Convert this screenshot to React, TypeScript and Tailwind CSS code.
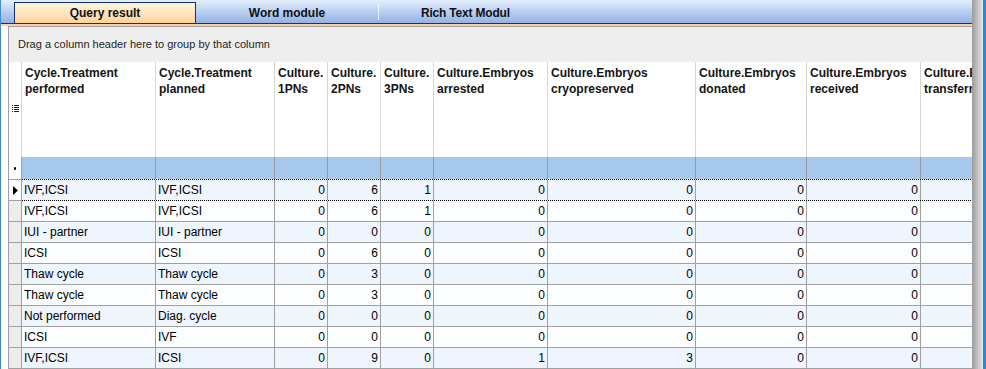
import React from "react";

type Col = { w: string; h: [string, string]; num: boolean };

const COLS: Col[] = [
  { w: "w-[134px]", h: ["Cycle.Treatment", "performed"], num: false },
  { w: "w-[119px]", h: ["Cycle.Treatment", "planned"], num: false },
  { w: "w-[53px]", h: ["Culture.", "1PNs"], num: true },
  { w: "w-[53px]", h: ["Culture.", "2PNs"], num: true },
  { w: "w-[53px]", h: ["Culture.", "3PNs"], num: true },
  { w: "w-[114px]", h: ["Culture.Embryos", "arrested"], num: true },
  { w: "w-[148px]", h: ["Culture.Embryos", "cryopreserved"], num: true },
  { w: "w-[111px]", h: ["Culture.Embryos", "donated"], num: true },
  { w: "w-[114px]", h: ["Culture.Embryos", "received"], num: true },
  { w: "w-[60px]", h: ["Culture.Embryos", "transferred"], num: true },
];

const ROWS: string[][] = [
  ["IVF,ICSI", "IVF,ICSI", "0", "6", "1", "0", "0", "0", "0", ""],
  ["IVF,ICSI", "IVF,ICSI", "0", "6", "1", "0", "0", "0", "0", ""],
  ["IUI - partner", "IUI - partner", "0", "0", "0", "0", "0", "0", "0", ""],
  ["ICSI", "ICSI", "0", "6", "0", "0", "0", "0", "0", ""],
  ["Thaw cycle", "Thaw cycle", "0", "3", "0", "0", "0", "0", "0", ""],
  ["Thaw cycle", "Thaw cycle", "0", "3", "0", "0", "0", "0", "0", ""],
  ["Not performed", "Diag. cycle", "0", "0", "0", "0", "0", "0", "0", ""],
  ["ICSI", "IVF", "0", "0", "0", "0", "0", "0", "0", ""],
  ["IVF,ICSI", "ICSI", "0", "9", "0", "1", "3", "0", "0", ""],
];

const font = { fontFamily: '"Liberation Sans", Arial, sans-serif' };

function ColumnsIcon() {
  return (
    <svg width="7" height="9" viewBox="0 0 7 9">
      {[0, 1, 2, 3].map((i) => (
        <g key={i} fill="#222">
          <rect x="0" y={1 + i * 2} width="1" height="1" />
          <rect x="2" y={1 + i * 2} width="5" height="1" />
        </g>
      ))}
    </svg>
  );
}

function Triangle() {
  return (
    <svg width="5" height="9" viewBox="0 0 5 9">
      <polygon points="0,0 5,4.5 0,9" fill="#000" />
    </svg>
  );
}

export default function App() {
  return (
    <div className="w-[986px] h-[369px] flex overflow-hidden bg-white" style={font}>
      <div className="w-[1px] shrink-0 bg-[#3c8ddb]" />
      <div className="w-[971px] shrink-0 flex flex-col">
        {/* Tab bar */}
        <div className="h-[24px] shrink-0 flex items-end pl-[13px] border-b border-[#16307e] bg-linear-to-b from-[#e3eefc] to-[#92b2e6]">
          <div className="w-[182px] h-[21px] flex items-center justify-center border-t border-l border-r border-[#12307e] bg-linear-to-b from-[#fff6de] to-[#fcd39b] text-[12px] font-bold text-[#111]">
            Query result
          </div>
          <div className="w-[182px] h-[21px] flex items-center justify-center text-[12px] font-bold text-[#111]">
            Word module
          </div>
          <div className="w-[1px] h-[16px] mb-[3px] bg-[#f2f6fd]" />
          <div className="h-[21px] flex items-center pl-[42px] text-[12px] font-bold text-[#111] tracking-[-0.2px]">
            Rich Text Modul
          </div>
        </div>
        <div className="h-[2px] shrink-0 bg-[#fbd0a2]" />
        <div className="flex flex-1 min-h-0">
          <div className="w-[7px] shrink-0 bg-white" />
          <div className="flex-1 min-w-0 border-l border-t border-[#a0a0a0] flex flex-col overflow-hidden">
            {/* group panel */}
            <div className="h-[35px] shrink-0 bg-[#eeeeee] flex items-center pl-[9px] text-[11px] text-[#1e1e1e]">
              Drag a column header here to group by that column
            </div>
            {/* header */}
            <div className="h-[95px] shrink-0 flex bg-white">
              <div className="w-[13px] shrink-0 border-r border-[#d6d6d6] flex items-center justify-center pb-[3px]">
                <ColumnsIcon />
              </div>
              {COLS.map((c, i) => (
                <div
                  key={i}
                  className={`${c.w} shrink-0 border-r border-[#d6d6d6] pl-[3px] pt-[3px] text-[12px] leading-[16px] font-bold text-[#141414] whitespace-nowrap overflow-hidden`}
                >
                  <div>{c.h[0]}</div>
                  <div>{c.h[1]}</div>
                </div>
              ))}
            </div>
            {/* filter row */}
            <div className="h-[22px] shrink-0 flex">
              <div className="w-[13px] shrink-0 bg-white border-r border-[#a0a0a0] flex items-center justify-center">
                <div className="w-[2px] h-[3px] bg-black rounded-[1px]" />
              </div>
              {COLS.map((c, i) => (
                <div key={i} className={`${c.w} shrink-0 bg-[#a7c8ed] border-r border-[#9a9a9a]`} />
              ))}
            </div>
            {/* data rows */}
            {ROWS.map((r, ri) => {
              const first = ri === 0;
              const bg = ri % 2 === 0 ? "bg-[#eef5fd]" : "bg-[#fcfdff]";
              return (
                <div key={ri} className={`${first ? "h-[22px]" : "h-[21px]"} shrink-0 flex`}>
                  <div
                    className={`w-[13px] shrink-0 border-r border-b border-[#a0a0a0] flex items-center justify-center ${
                      first ? "bg-white border-t" : "bg-[#ececec]"
                    }`}
                  >
                    {first && <Triangle />}
                  </div>
                  <div
                    className={`flex ${bg} ${
                      first ? "border-t border-b border-dotted border-black" : "border-b border-[#a0a0a0]"
                    }`}
                  >
                    {COLS.map((c, ci) => (
                      <div
                        key={ci}
                        className={`${c.w} shrink-0 border-r border-solid border-[#a0a0a0] flex items-center text-[12px] text-black whitespace-nowrap overflow-hidden ${
                          c.num ? "justify-end pr-[2px]" : "pl-[2px]"
                        }`}
                      >
                        {r[ci]}
                      </div>
                    ))}
                  </div>
                </div>
              );
            })}
          </div>
        </div>
      </div>
      <div className="w-[11px] shrink-0 bg-linear-to-r from-[#9b9b9b] to-[#e8e8e8]" />
      <div className="w-[3px] shrink-0 bg-[#2f86d8]" />
    </div>
  );
}
